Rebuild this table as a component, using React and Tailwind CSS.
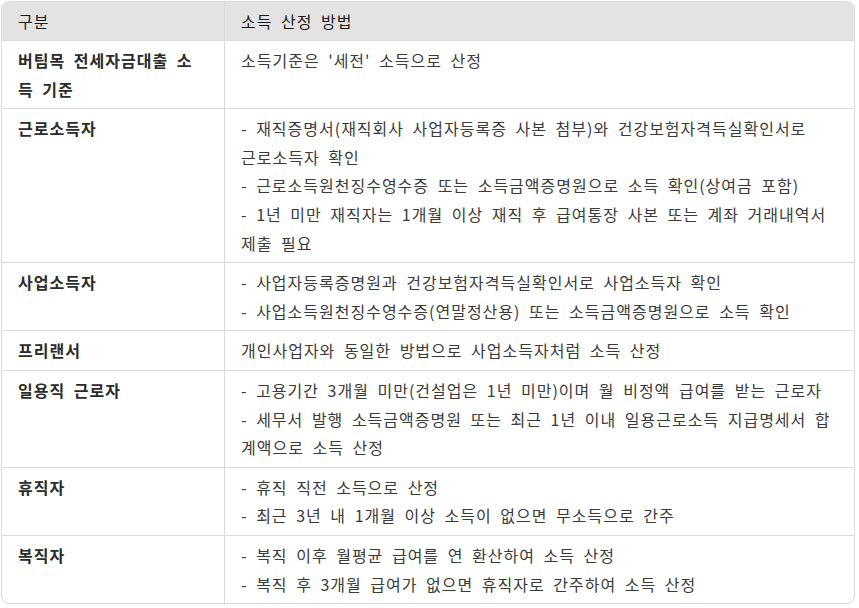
const rows = [
  {
    label: "버팀목 전세자금대출 소득 기준",
    lines: ["소득기준은 '세전' 소득으로 산정"],
  },
  {
    label: "근로소득자",
    lines: [
      <>
        - 재직증명서(재직회사 사업자등록증 사본 첨부)와 건강보험자격득실확인서로
        <br />
        근로소득자 확인
      </>,
      "- 근로소득원천징수영수증 또는 소득금액증명원으로 소득 확인(상여금 포함)",
      "- 1년 미만 재직자는 1개월 이상 재직 후 급여통장 사본 또는 계좌 거래내역서 제출 필요",
    ],
  },
  {
    label: "사업소득자",
    lines: [
      "- 사업자등록증명원과 건강보험자격득실확인서로 사업소득자 확인",
      "- 사업소득원천징수영수증(연말정산용) 또는 소득금액증명원으로 소득 확인",
    ],
  },
  {
    label: "프리랜서",
    lines: ["개인사업자와 동일한 방법으로 사업소득자처럼 소득 산정"],
  },
  {
    label: "일용직 근로자",
    lines: [
      "- 고용기간 3개월 미만(건설업은 1년 미만)이며 월 비정액 급여를 받는 근로자",
      "- 세무서 발행 소득금액증명원 또는 최근 1년 이내 일용근로소득 지급명세서 합계액으로 소득 산정",
    ],
  },
  {
    label: "휴직자",
    lines: ["- 휴직 직전 소득으로 산정", "- 최근 3년 내 1개월 이상 소득이 없으면 무소득으로 간주"],
  },
  {
    label: "복직자",
    lines: [
      "- 복직 이후 월평균 급여를 연 환산하여 소득 산정",
      "- 복직 후 3개월 급여가 없으면 휴직자로 간주하여 소득 산정",
    ],
  },
];

export default function App() {
  return (
    <div className="p-px bg-white min-h-screen font-['Noto_Sans_CJK_KR','Noto_Sans',sans-serif] text-[16px] tracking-[1px] [word-spacing:4px]">
      <div className="w-[854px] border border-[#d9d9d9] rounded-lg overflow-hidden">
        {/* header */}
        <div className="grid grid-cols-[223px_1fr] h-[39px] bg-[#e3e3e3] border-b border-[#d9d9d9] text-[#1a1a1a]">
          <div className="px-4 flex items-center border-r border-[#d9d9d9]">구분</div>
          <div className="px-4 flex items-center">소득 산정 방법</div>
        </div>
        {rows.map((row, i) => (
          <div
            key={row.label}
            className={
              "grid grid-cols-[223px_1fr] leading-[28.6px] " +
              (i < rows.length - 1 ? "border-b border-[#d9d9d9]" : "")
            }
          >
            <div className="px-4 py-[5px] border-r border-[#d9d9d9] font-bold text-[#2b2b2b]">
              {row.label}
            </div>
            <div className="pl-4 pr-4 py-[5px] text-[#3a3a3a]">
              {row.lines.map((line, j) => (
                <p key={j}>{line}</p>
              ))}
            </div>
          </div>
        ))}
      </div>
    </div>
  );
}
